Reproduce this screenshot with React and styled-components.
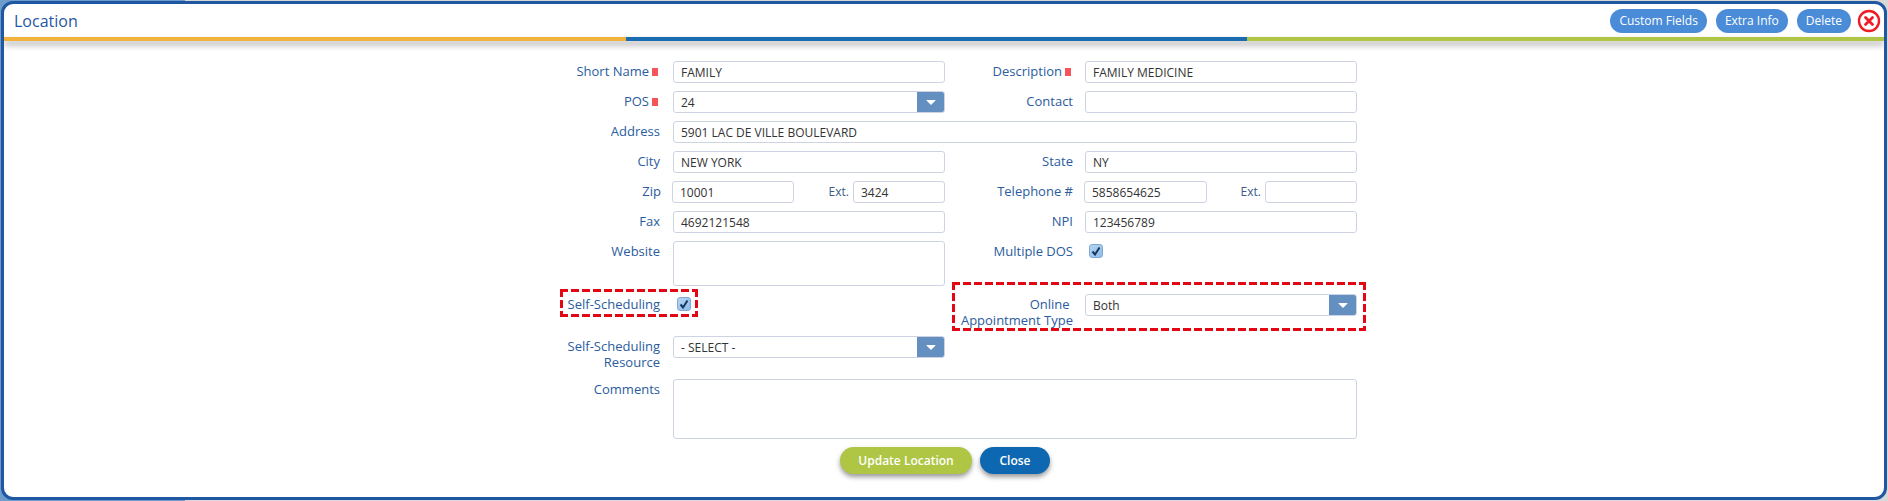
import * as React from 'react';
import styled, { createGlobalStyle } from 'styled-components';

const GlobalStyle = createGlobalStyle`
  html, body {
    margin: 0;
    padding: 0;
    height: 501px;
    overflow: hidden;
    font-family: "Open Sans", "Noto Sans", sans-serif;
    font-size: 12px;
    background: linear-gradient(90deg, #6b9ccb 0 185px, #d8d8d8 185px);
  }
`;

const Modal = styled.div`
  box-sizing: border-box;
  width: 1886px;
  height: 499px;
  margin: 1px 0 0 1px;
  border: 3px solid #1f57a3;
  border-radius: 12px;
  background: #fff;
  overflow: hidden;
`;

const Header = styled.header`
  display: flex;
  align-items: center;
  height: 33px;
  padding: 0 3px 0 10px;
`;

const Title = styled.h1`
  flex: 1;
  margin: 0;
  font-size: 16px;
  font-weight: 400;
  color: #1f57a3;
`;

const HeaderActions = styled.div`
  display: flex;
  align-items: center;
  gap: 9px;
`;

const PillButton = styled.button`
  height: 24px;
  padding: 0 9px;
  border: 0;
  border-radius: 12px;
  background: #4a8cd8;
  color: #fff;
  font-family: inherit;
  font-size: 12px;
  font-weight: 400;
`;

const CloseIcon = styled.svg`
  display: block;
  margin-left: -3px;
`;

const Stripes = styled.div`
  display: flex;
  height: 4px;
  box-shadow: 0 4px 6px rgba(0, 0, 0, 0.35);
`;

const Stripe = styled.div`
  flex: ${(p) => p.$size};
  background: ${(p) => p.$color};
`;

const Form = styled.form`
  position: relative;
  display: grid;
  grid-template-columns: 133px 272px 140px 272px;
  row-gap: 8px;
  align-items: start;
  margin: 20px 0 0 536px;
  width: 817px;
`;

const Label = styled.label`
  box-sizing: border-box;
  padding: 2px ${(p) => (p.$tight ? 12 : 13)}px 0 0;
  font-size: 13px;
  line-height: 16px;
  text-align: right;
  color: #2a5c9e;
`;

const RightLabel = styled(Label)`
  padding-right: 12px;
`;

const Required = styled.span`
  display: inline-block;
  width: 6px;
  height: 8px;
  margin: 0 2px 0 3px;
  background: #f7545a;
`;

const Input = styled.input`
  box-sizing: border-box;
  display: block;
  width: 100%;
  height: 22px;
  padding: 0 7px;
  border: 1px solid #cdd3e2;
  border-radius: 3px;
  background: #fff;
  color: #333;
  font-family: inherit;
  font-size: 12px;
`;

const WideInput = styled(Input)`
  grid-column: 2 / 5;
`;

const TextArea = styled.textarea`
  box-sizing: border-box;
  display: block;
  width: 100%;
  height: 45px;
  padding: 4px 7px;
  border: 1px solid #cdd3e2;
  border-radius: 3px;
  resize: none;
  font-family: inherit;
  font-size: 12px;
`;

const CommentsLabel = styled(Label)`
  margin-top: 1px;
`;

const CommentsArea = styled(TextArea)`
  grid-column: 2 / 5;
  height: 60px;
  margin-top: 1px;
`;

const Split = styled.div`
  display: flex;
  align-items: flex-start;
  margin-left: -1px;
`;

const SplitInput = styled(Input)`
  flex: none;
  width: ${(p) => p.$width}px;
`;

const ExtLabel = styled.label`
  flex: 1;
  padding: 3px 4px 0 0;
  line-height: 16px;
  text-align: right;
  color: #3d5c85;
`;

const Select = styled.div`
  box-sizing: border-box;
  display: flex;
  align-items: center;
  justify-content: space-between;
  height: 22px;
  padding-left: 7px;
  border: 1px solid #cdd3e2;
  border-radius: 3px;
  color: #333;
  overflow: hidden;
`;

const SelectArrow = styled.span`
  display: flex;
  align-items: center;
  justify-content: center;
  width: 28px;
  height: 22px;
  margin-right: -1px;
  background: #6390c0;

  &::after {
    content: '';
    border-style: solid;
    border-width: 5px 5px 0;
    border-color: #fff transparent transparent;
    border-radius: 1px;
  }
`;

const CheckBox = styled.span`
  box-sizing: border-box;
  display: flex;
  align-items: center;
  justify-content: center;
  width: 14px;
  height: 14px;
  margin: 3px 0 0 4px;
  border: 1px solid #7fa9d4;
  border-radius: 3px;
  background: linear-gradient(135deg, #b5d4f2, #8fbce8);
`;

const dashH = 'repeating-linear-gradient(90deg, #e30613 0 8px, transparent 8px 11px)';
const dashV = 'repeating-linear-gradient(180deg, #e30613 0 8px, transparent 8px 11px)';

const Highlight = styled.div`
  position: absolute;
  left: ${(p) => p.$left}px;
  top: ${(p) => p.$top}px;
  width: ${(p) => p.$width}px;
  height: ${(p) => p.$height}px;
  background:
    ${dashH} top / 100% 3px no-repeat,
    ${dashH} bottom / 100% 3px no-repeat,
    ${dashV} left / 3px 100% no-repeat,
    ${dashV} right / 3px 100% no-repeat;
  pointer-events: none;
`;

const Footer = styled.div`
  display: flex;
  justify-content: center;
  gap: 8px;
  margin: 8px 0 0 2px;
`;

const ActionButton = styled.button`
  width: ${(p) => p.$width}px;
  height: 27px;
  padding: 0;
  border: 0;
  border-radius: 14px;
  background: ${(p) => p.$color};
  box-shadow: 0 3px 5px rgba(0, 0, 0, 0.4);
  color: #fff;
  font-family: inherit;
  font-size: 12px;
  font-weight: 600;
`;

const Check = () => (
  <CheckBox>
    <svg width="10" height="10" viewBox="0 0 10 10">
      <path d="M1.5 5.5 L4 8.5 L8.5 1.5" fill="none" stroke="#16365f" strokeWidth="2" />
    </svg>
  </CheckBox>
);

const App = () => (
  <>
    <GlobalStyle />
    <Modal>
      <Header>
        <Title>Location</Title>
        <HeaderActions>
          <PillButton>Custom Fields</PillButton>
          <PillButton>Extra Info</PillButton>
          <PillButton>Delete</PillButton>
          <CloseIcon width="24" height="24" viewBox="0 0 24 24">
            <circle cx="12" cy="12" r="10" fill="#fff" stroke="#ee1c25" strokeWidth="2.4" />
            <path d="M8.5 8.5 L15.5 15.5 M15.5 8.5 L8.5 15.5" stroke="#ee1c25" strokeWidth="2.8" strokeLinecap="round" />
          </CloseIcon>
        </HeaderActions>
      </Header>
      <Stripes>
        <Stripe $size={622} $color="#f2b33d" />
        <Stripe $size={621} $color="#1a6cb0" />
        <Stripe $size={637} $color="#aec644" />
      </Stripes>
      <Form>
        <Label>Short Name<Required /></Label>
        <Input defaultValue="FAMILY" />
        <RightLabel>Description<Required /></RightLabel>
        <Input defaultValue="FAMILY MEDICINE" />

        <Label>POS<Required /></Label>
        <Select>24<SelectArrow /></Select>
        <RightLabel>Contact</RightLabel>
        <Input />

        <Label>Address</Label>
        <WideInput defaultValue="5901 LAC DE VILLE BOULEVARD" />

        <Label>City</Label>
        <Input defaultValue="NEW YORK" />
        <RightLabel>State</RightLabel>
        <Input defaultValue="NY" />

        <Label $tight>Zip</Label>
        <Split>
          <SplitInput $width={122} defaultValue="10001" />
          <ExtLabel>Ext.</ExtLabel>
          <SplitInput $width={92} defaultValue="3424" />
        </Split>
        <RightLabel>Telephone #</RightLabel>
        <Split>
          <SplitInput $width={123} defaultValue="5858654625" />
          <ExtLabel>Ext.</ExtLabel>
          <SplitInput $width={92} />
        </Split>

        <Label>Fax</Label>
        <Input defaultValue="4692121548" />
        <RightLabel>NPI</RightLabel>
        <Input defaultValue="123456789" />

        <Label>Website</Label>
        <TextArea />
        <RightLabel>Multiple DOS</RightLabel>
        <Check />

        <Label>Self-Scheduling</Label>
        <Check />
        <RightLabel>
          Online&nbsp;
          <br />
          Appointment Type
        </RightLabel>
        <Select>Both<SelectArrow /></Select>

        <Label>
          Self-Scheduling
          <br />
          Resource
        </Label>
        <Select>- SELECT -<SelectArrow /></Select>
        <span />
        <span />

        <CommentsLabel>Comments</CommentsLabel>
        <CommentsArea />

        <Highlight $left={20} $top={228} $width={138} $height={28} />
        <Highlight $left={412} $top={221} $width={414} $height={49} />
      </Form>
      <Footer>
        <ActionButton $color="#aec644" $width={132}>Update Location</ActionButton>
        <ActionButton $color="#0d68b1" $width={70}>Close</ActionButton>
      </Footer>
    </Modal>
  </>
);

export default App;
